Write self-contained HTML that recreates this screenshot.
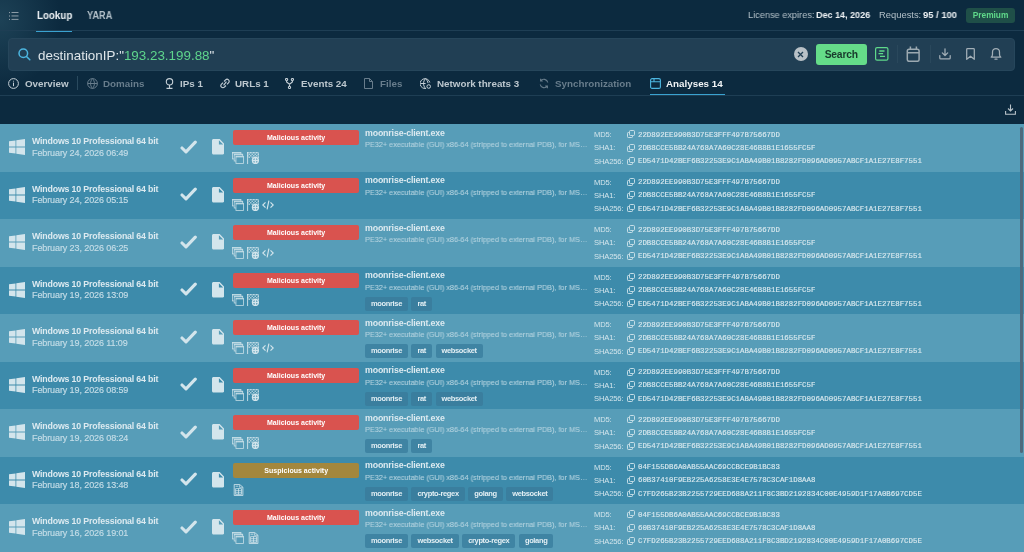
<!DOCTYPE html>
<html><head><meta charset="utf-8">
<style>
*{box-sizing:border-box;margin:0;padding:0}
html,body{width:1024px;height:552px;overflow:hidden;background:#0c2a3f;font-family:"Liberation Sans",sans-serif}
.abs{position:absolute}
.t{position:absolute;white-space:nowrap;line-height:1}
#topline{position:absolute;left:0;top:30px;width:1024px;height:1px;background:#1e3e54}
#tabline{position:absolute;left:0;top:95px;width:1024px;height:1px;background:#1e3e54}
.search{position:absolute;left:8px;top:38px;width:1007px;height:33px;background:#213f54;border-radius:4px;border:1px solid #26465b}
.tab{position:absolute;top:78px;font-size:9.8px;font-weight:bold;color:#bcc7ce;white-space:nowrap;line-height:12px}
.tab.dim{color:#687d8c}
.tab.act{color:#f2f5f7}
.ti{position:absolute;top:78px}
.row{position:absolute;left:0;width:1024px;height:48px}
.row>div{position:absolute;white-space:nowrap}
.win{left:9px;top:15px;color:#d3e5ec;width:16px;height:16px;line-height:0}
.os{left:32px;top:12px;font-size:8.8px;letter-spacing:-0.17px;font-weight:bold;color:#dceaf0;line-height:10px}
.date{left:32px;top:23.8px;font-size:9px;letter-spacing:-0.1px;color:#c5dde7;-webkit-text-stroke:0.15px #c5dde7;line-height:10px}
.chk{left:180px;top:15.5px;color:#d3e5ec;line-height:0}
.file{left:211.8px;top:15px;color:#d3e5ec;line-height:0}
.badge{left:233px;top:6px;width:126px;height:14.5px;border-radius:2px;color:#fff;font-size:8px;font-weight:bold;text-align:center;line-height:15.5px}
.badge span{display:inline-block;transform:scaleX(.88)}
.badge.mal{background:#d9534f}
.badge.sus{background:#a3873d}
.sicons{left:232px;top:27.5px;line-height:0;color:#d3e5ec}
.sic{display:inline-block;margin-right:3px;vertical-align:top}
.fname{left:365px;top:3.9px;font-size:8.8px;letter-spacing:-0.15px;font-weight:bold;color:#dceaf0;line-height:10px}
.desc{left:365px;top:16px;font-size:7.8px;transform:scaleX(.935);transform-origin:0 0;-webkit-text-stroke:0.1px #b4d3df;color:#b4d3df;line-height:9px}
.tags{left:365px;top:30.2px;line-height:0;font-size:0}
.tag{display:inline-block;height:14px;line-height:14.4px;padding:0 6px;margin-right:3.5px;background:#3f84a3;border-radius:2px;font-size:7.5px;letter-spacing:-0.35px;font-weight:bold;color:#e3eff4}
.row.dk .tag{background:#3a7e9e}
.hl{left:593.5px;font-size:7.6px;letter-spacing:-0.15px;color:#d3e5ec;line-height:9px}
.hv{left:637.5px;font-family:"Liberation Mono",monospace;font-size:7.4px;color:#d8e8ee;-webkit-text-stroke:0.15px #d8e8ee;line-height:9px}
.cp{left:627px;color:#d3e5ec;line-height:0}
#scroll{position:absolute;left:1019.5px;top:127px;width:3px;height:326px;background:#4d6a7d;border-radius:2px}
.t,.tab,.row>div,.search-t{will-change:transform}
</style></head><body>
<!-- top bar -->
<div class="abs" style="left:0;top:0;width:60px;height:96px;background:radial-gradient(ellipse 60px 70px at 0 20px,rgba(50,95,115,.45),rgba(12,42,63,0))"></div>
<svg class="abs" style="left:9px;top:12px" width="10" height="8" viewBox="0 0 10 8" fill="#9aa8b1"><rect x="0" y=".1" width="1" height="1"/><rect x="2.5" y=".1" width="7" height=".9"/><rect x="0" y="3.5" width="1" height="1"/><rect x="2.5" y="3.5" width="7" height=".9"/><rect x="0" y="6.9" width="1" height="1"/><rect x="2.5" y="6.9" width="7" height=".9"/></svg>
<div class="t" style="left:37px;top:11px;font-size:10.3px;font-weight:bold;color:#eef2f5;transform:scaleX(.95);transform-origin:0 0">Lookup</div>
<div class="t" style="left:87px;top:11px;font-size:10.3px;font-weight:bold;color:#b3c0c9;transform:scaleX(.9);transform-origin:0 0">YARA</div>
<div class="abs" style="left:36px;top:30px;width:36px;height:2px;background:#3aa2d0"></div>
<div id="topline"></div>
<div class="t" style="left:748px;top:9.8px;font-size:9.4px;color:#b3c0c8;transform:scaleX(.98);transform-origin:0 0">License expires:</div>
<div class="t" style="left:816.2px;top:9.8px;font-size:9.6px;font-weight:bold;color:#eef2f5;transform:scaleX(.94);transform-origin:0 0">Dec 14, 2026</div>
<div class="t" style="left:879px;top:9.8px;font-size:9.4px;color:#b3c0c8">Requests:</div>
<div class="t" style="left:923px;top:9.8px;font-size:9.6px;font-weight:bold;color:#eef2f5;transform:scaleX(.98);transform-origin:0 0">95 / 100</div>

<div class="abs" style="left:966px;top:8px;width:49px;height:14.5px;background:#1f4f48;border-radius:3px;color:#5fd98a;font-size:9.6px;font-weight:bold;text-align:center;line-height:13.4px;will-change:transform"><span style="display:inline-block;transform:scaleX(.87)">Premium</span></div>

<!-- search -->
<div class="search"></div>
<svg class="abs" style="left:18px;top:48px" width="13" height="13" viewBox="0 0 13 13" fill="none" stroke="#4cb6e0" stroke-width="1.5"><circle cx="5.3" cy="5.3" r="4.3"/><path d="M8.5 8.5L11.8 11.8" stroke-linecap="round"/></svg>
<div class="t" style="left:37.5px;top:47.5px;font-size:13.4px;color:#dfe6ea;line-height:15px">destinationIP:"<span style="color:#5ed58c">193.23.199.88</span>"</div>
<div class="abs" style="left:793.5px;top:47px;width:14px;height:14px;border-radius:50%;background:#b9c1c7"></div>
<svg class="abs" style="left:797px;top:50.5px" width="7" height="7" viewBox="0 0 7 7" stroke="#213f54" stroke-width="1.3"><path d="M1 1L6 6M6 1L1 6"/></svg>
<div class="abs" style="left:815.5px;top:43.5px;width:50.5px;height:21px;background:#65dc89;border-radius:3px;color:#183a2c;font-size:10.3px;font-weight:bold;text-align:center;line-height:21px;letter-spacing:-0.2px;will-change:transform">Search</div>
<svg class="abs" style="left:874.5px;top:47.2px" width="14" height="14" viewBox="0 0 14 14" fill="none" stroke="#5fd98a" stroke-width="1.2"><rect x=".6" y=".6" width="12.3" height="12.6" rx="1.5"/><path d="M4.3 4h5.2M3.5 6.6h4.6M5 9.3h5" stroke-width="1.3"/></svg>
<div class="abs" style="left:897px;top:45px;width:1px;height:18px;background:#2a485c"></div>
<svg class="abs" style="left:906px;top:46px" width="14" height="16" viewBox="0 0 14 16" fill="none" stroke="#9ca9b1" stroke-width="1.5"><rect x="1.3" y="3.3" width="11.8" height="12" rx="1.8"/><path d="M1.3 6.8h11.8M4.4 .6v3M10.4 .6v3"/></svg>
<div class="abs" style="left:930px;top:45px;width:1px;height:18px;background:#2a485c"></div>
<svg class="abs" style="left:939px;top:48px" width="12" height="12" viewBox="0 0 12 12" fill="none" stroke="#a3afb7" stroke-width="1.25" stroke-linecap="round" stroke-linejoin="round"><path d="M6 .8v6.6M3.3 4.9L6 7.5L8.7 4.9M.8 7.6v2.4q0 .9.9 .9h8.6q.9 0 .9-.9V7.6"/></svg>
<svg class="abs" style="left:966px;top:48px" width="9" height="12" viewBox="0 0 9 12" fill="none" stroke="#a3afb7" stroke-width="1.25" stroke-linejoin="round"><path d="M1.5 .7h6q.8 0 .8.8v9.8L4.5 8.2L.7 11.3V1.5q0-.8.8-.8z"/></svg>
<svg class="abs" style="left:990px;top:47px" width="12" height="13" viewBox="0 0 12 13" fill="none" stroke="#a3afb7" stroke-width="1.25" stroke-linejoin="round" stroke-linecap="round"><path d="M1.2 10.2h9.6q-1.3-1.2-1.3-3V5A3.5 3.5 0 0 0 2.5 5v2.2q0 1.8-1.3 3z"/><path d="M5 12.2h2"/></svg>

<!-- tabs -->
<svg class="ti" style="left:8px;top:78px" width="11" height="11" viewBox="0 0 11 11" fill="none" stroke="#c6d0d7" stroke-width="1"><circle cx="5.5" cy="5.5" r="4.9"/><path d="M5.5 4.6v3.6M5.5 2.8v.8"/></svg>
<div class="tab" style="left:24.5px">Overview</div>
<div class="abs" style="left:77px;top:76px;width:1px;height:14px;background:#2a4a5e"></div>
<svg class="ti" style="left:86.5px" width="11" height="11" viewBox="0 0 11 11" fill="none" stroke="#687d8c" stroke-width="1"><circle cx="5.5" cy="5.5" r="4.9"/><path d="M.6 5.5h9.8M5.5 .6c-2.6 2.8-2.6 7 0 9.8M5.5 .6c2.6 2.8 2.6 7 0 9.8"/></svg>
<div class="tab dim" style="left:103px">Domains</div>
<svg class="ti" style="left:164.5px" width="9" height="11" viewBox="0 0 9 11" fill="none" stroke="#c6d0d7" stroke-width="1.1"><circle cx="4.5" cy="3.8" r="3.2"/><path d="M4.5 7v3.2M1.5 10.4h6"/></svg>
<div class="tab" style="left:179.5px">IPs 1</div>
<svg class="ti" style="left:219.5px" width="10" height="11" viewBox="0 0 10 11" fill="none" stroke="#c6d0d7" stroke-width="1.1"><path d="M4 3.5L5.6 1.9a2 2 0 0 1 2.9 2.9L6.9 6.4M6 7.5L4.4 9.1a2 2 0 0 1-2.9-2.9L3.1 4.6M3.6 7.4L6.4 3.6"/></svg>
<div class="tab" style="left:235px">URLs 1</div>
<svg class="ti" style="left:285px" width="9" height="11" viewBox="0 0 9 11" fill="none" stroke="#c6d0d7" stroke-width="1.1"><circle cx="1.6" cy="1.6" r="1.1"/><circle cx="7.4" cy="1.6" r="1.1"/><path d="M1.6 2.7v1.3L4.5 6.2L7.4 4V2.7M4.5 6.2v2.2"/><circle cx="4.5" cy="9.4" r="1.1"/></svg>
<div class="tab" style="left:300.5px">Events 24</div>
<svg class="ti" style="left:363.5px" width="9" height="11" viewBox="0 0 9 11" fill="none" stroke="#687d8c" stroke-width="1"><path d="M.5 .5h5l3 3v7h-8z M5.5 .5v3h3"/></svg>
<div class="tab dim" style="left:379.5px">Files</div>
<svg class="ti" style="left:419.5px" width="11" height="11" viewBox="0 0 11 11" fill="none" stroke="#c6d0d7" stroke-width="1"><path d="M9.8 4.5A4.9 4.9 0 1 0 6 10.4"/><path d="M.6 5.5h5M5.5 .6c-2.6 2.8-2.6 7 0 9.8M5.5 .6c1.6 1.5 2.3 3 2.5 4.5"/><circle cx="8.7" cy="8.5" r="1.8"/></svg>
<div class="tab" style="left:436.5px">Network threats 3</div>
<svg class="ti" style="left:538.5px" width="10" height="11" viewBox="0 0 10 11" fill="none" stroke="#687d8c" stroke-width="1.1"><path d="M8.8 4.5A4 4 0 0 0 1.6 3M1.2 6.5A4 4 0 0 0 8.4 8M1.6 .8V3h2.2M8.4 10.2V8H6.2"/></svg>
<div class="tab dim" style="left:554.5px">Synchronization</div>
<svg class="ti" style="left:649.5px" width="11" height="11" viewBox="0 0 11 11" fill="none" stroke="#4cb6e0" stroke-width="1.1"><rect x=".6" y=".6" width="9.8" height="9.8" rx="1.5"/><path d="M.6 3.8h9.8M4 .6v3.2"/></svg>
<div class="tab act" style="left:666px">Analyses 14</div>
<div class="abs" style="left:649.5px;top:94px;width:75.5px;height:2px;background:#3aa2d0"></div>
<div id="tabline"></div>
<svg class="abs" style="left:1005px;top:104px" width="11" height="11" viewBox="0 0 11 11" fill="none" stroke="#b9c3ca" stroke-width="1.1"><path d="M5.5 .5v6.5M3 4.5L5.5 7L8 4.5M.6 7v3.3h9.8V7"/></svg>

<!-- rows -->
<div class="row lt" style="top:124.0px;background:#579db8">
<div class="win"><svg width="16" height="16" viewBox="0 0 16 16" fill="currentColor"><path d="M0 2.3L6.5 1.4V7.6H0zM7.3 1.3L16 0V7.6H7.3zM0 8.4H6.5V14.6L0 13.7zM7.3 8.4H16V16L7.3 14.7z"/></svg></div>
<div class="os">Windows 10 Professional 64 bit</div>
<div class="date">February 24, 2026 06:49</div>
<div class="chk"><svg width="17" height="14" viewBox="0 0 17 14"><path d="M2 8L6 11.8L15.3 2.2" fill="none" stroke="currentColor" stroke-width="3.1" stroke-linecap="round" stroke-linejoin="round"/></svg></div>
<div class="file"><svg width="12.3" height="15.5" viewBox="4 2 16 20"><path d="M6 2c-1.1 0-1.99.9-1.99 2L4 20c0 1.1.89 2 1.99 2H18c1.1 0 2-.9 2-2V8l-6-6H6zm7 7V3.5L18.5 9H13z" fill="currentColor"/></svg></div>
<div class="badge mal"><span>Malicious activity</span></div>
<div class="sicons"><span class="sic stack"><svg width="12" height="12" viewBox="0 0 12 12"><g fill="#579db8" stroke="currentColor" stroke-width=".8" opacity=".9"><rect x=".45" y=".45" width="8.5" height="6.5"/><rect x="2.2" y="2.2" width="8.5" height="6.8"/><rect x="3.95" y="4.3" width="7.6" height="7.25"/></g><g fill="currentColor" opacity=".75"><rect x=".45" y=".45" width="8.5" height="1.1"/><rect x="2.2" y="2.2" width="8.5" height="1.1"/><rect x="3.95" y="4.3" width="7.6" height="1.1"/></g></svg></span><span class="sic checker"><svg width="12" height="12" viewBox="0 0 12 12"><g fill="currentColor" opacity=".7"><rect x="0.0" y="0.0" width="1.5" height="1.5"/><rect x="3.0" y="0.0" width="1.5" height="1.5"/><rect x="6.0" y="0.0" width="1.5" height="1.5"/><rect x="9.0" y="0.0" width="1.5" height="1.5"/><rect x="1.5" y="1.5" width="1.5" height="1.5"/><rect x="4.5" y="1.5" width="1.5" height="1.5"/><rect x="7.5" y="1.5" width="1.5" height="1.5"/><rect x="10.5" y="1.5" width="1.5" height="1.5"/><rect x="0.0" y="3.0" width="1.5" height="1.5"/><rect x="3.0" y="3.0" width="1.5" height="1.5"/><rect x="6.0" y="3.0" width="1.5" height="1.5"/><rect x="9.0" y="3.0" width="1.5" height="1.5"/><rect x="1.5" y="4.5" width="1.5" height="1.5"/><rect x="4.5" y="4.5" width="1.5" height="1.5"/><rect x="7.5" y="4.5" width="1.5" height="1.5"/><rect x="10.5" y="4.5" width="1.5" height="1.5"/></g><rect x="0" y="0" width="1.1" height="12" fill="currentColor" opacity=".8"/><path d="M.5 .5H11.5V6" fill="none" stroke="currentColor" stroke-width=".8" opacity=".6"/><circle cx="8.4" cy="8.5" r="3.6" fill="#579db8"/><circle cx="8.4" cy="8.5" r="3.0" fill="none" stroke="currentColor" stroke-width="1.3"/><path d="M8.4 5.8v5.4M5.7 8.5h5.4" stroke="currentColor" stroke-width="1.4"/></svg></span></div>
<div class="fname">moonrise-client.exe</div>
<div class="desc">PE32+ executable (GUI) x86-64 (stripped to external PDB), for MS…</div>
<div class="tags"></div>
<div class="hl" style="top:6px">MD5:</div><div class="hl" style="top:19.3px">SHA1:</div><div class="hl" style="top:32.6px">SHA256:</div>
<div class="cp" style="top:6.3px"><svg width="8" height="8" viewBox="0 0 8 8" fill="none" stroke="currentColor" stroke-width=".9"><rect x="2.5" y=".5" width="5" height="5" rx="1"/><path d="M2 2.5H1.3Q.5 2.5 .5 3.3V6.7Q.5 7.5 1.3 7.5H4.7Q5.5 7.5 5.5 6.7V6"/></svg></div>
<div class="cp" style="top:19.6px"><svg width="8" height="8" viewBox="0 0 8 8" fill="none" stroke="currentColor" stroke-width=".9"><rect x="2.5" y=".5" width="5" height="5" rx="1"/><path d="M2 2.5H1.3Q.5 2.5 .5 3.3V6.7Q.5 7.5 1.3 7.5H4.7Q5.5 7.5 5.5 6.7V6"/></svg></div>
<div class="cp" style="top:32.9px"><svg width="8" height="8" viewBox="0 0 8 8" fill="none" stroke="currentColor" stroke-width=".9"><rect x="2.5" y=".5" width="5" height="5" rx="1"/><path d="M2 2.5H1.3Q.5 2.5 .5 3.3V6.7Q.5 7.5 1.3 7.5H4.7Q5.5 7.5 5.5 6.7V6"/></svg></div>
<div class="hv" style="top:6.6px">22D892EE990B3D75E3FFF497B75667DD</div><div class="hv" style="top:19.9px">2DB8CCE5BB24A768A7A60C28E46B8B1E1655FC5F</div><div class="hv" style="top:33.2px">ED5471D42BEF6B32253E9C1ABA49B01B8282FD096AD0957ABCF1A1E27E8F7551</div>
</div>
<div class="row dk" style="top:171.5px;background:#3d8bab">
<div class="win"><svg width="16" height="16" viewBox="0 0 16 16" fill="currentColor"><path d="M0 2.3L6.5 1.4V7.6H0zM7.3 1.3L16 0V7.6H7.3zM0 8.4H6.5V14.6L0 13.7zM7.3 8.4H16V16L7.3 14.7z"/></svg></div>
<div class="os">Windows 10 Professional 64 bit</div>
<div class="date">February 24, 2026 05:15</div>
<div class="chk"><svg width="17" height="14" viewBox="0 0 17 14"><path d="M2 8L6 11.8L15.3 2.2" fill="none" stroke="currentColor" stroke-width="3.1" stroke-linecap="round" stroke-linejoin="round"/></svg></div>
<div class="file"><svg width="12.3" height="15.5" viewBox="4 2 16 20"><path d="M6 2c-1.1 0-1.99.9-1.99 2L4 20c0 1.1.89 2 1.99 2H18c1.1 0 2-.9 2-2V8l-6-6H6zm7 7V3.5L18.5 9H13z" fill="currentColor"/></svg></div>
<div class="badge mal"><span>Malicious activity</span></div>
<div class="sicons"><span class="sic stack"><svg width="12" height="12" viewBox="0 0 12 12"><g fill="#3d8bab" stroke="currentColor" stroke-width=".8" opacity=".9"><rect x=".45" y=".45" width="8.5" height="6.5"/><rect x="2.2" y="2.2" width="8.5" height="6.8"/><rect x="3.95" y="4.3" width="7.6" height="7.25"/></g><g fill="currentColor" opacity=".75"><rect x=".45" y=".45" width="8.5" height="1.1"/><rect x="2.2" y="2.2" width="8.5" height="1.1"/><rect x="3.95" y="4.3" width="7.6" height="1.1"/></g></svg></span><span class="sic checker"><svg width="12" height="12" viewBox="0 0 12 12"><g fill="currentColor" opacity=".7"><rect x="0.0" y="0.0" width="1.5" height="1.5"/><rect x="3.0" y="0.0" width="1.5" height="1.5"/><rect x="6.0" y="0.0" width="1.5" height="1.5"/><rect x="9.0" y="0.0" width="1.5" height="1.5"/><rect x="1.5" y="1.5" width="1.5" height="1.5"/><rect x="4.5" y="1.5" width="1.5" height="1.5"/><rect x="7.5" y="1.5" width="1.5" height="1.5"/><rect x="10.5" y="1.5" width="1.5" height="1.5"/><rect x="0.0" y="3.0" width="1.5" height="1.5"/><rect x="3.0" y="3.0" width="1.5" height="1.5"/><rect x="6.0" y="3.0" width="1.5" height="1.5"/><rect x="9.0" y="3.0" width="1.5" height="1.5"/><rect x="1.5" y="4.5" width="1.5" height="1.5"/><rect x="4.5" y="4.5" width="1.5" height="1.5"/><rect x="7.5" y="4.5" width="1.5" height="1.5"/><rect x="10.5" y="4.5" width="1.5" height="1.5"/></g><rect x="0" y="0" width="1.1" height="12" fill="currentColor" opacity=".8"/><path d="M.5 .5H11.5V6" fill="none" stroke="currentColor" stroke-width=".8" opacity=".6"/><circle cx="8.4" cy="8.5" r="3.6" fill="#3d8bab"/><circle cx="8.4" cy="8.5" r="3.0" fill="none" stroke="currentColor" stroke-width="1.3"/><path d="M8.4 5.8v5.4M5.7 8.5h5.4" stroke="currentColor" stroke-width="1.4"/></svg></span><span class="sic code"><svg width="12" height="12" viewBox="0 0 12 12" fill="none" stroke="currentColor" stroke-width="1.15"><path d="M3.5 3.3L.8 6l2.7 2.7M8.5 3.3L11.2 6l-2.7 2.7M6.9 1.7L5.1 10.3"/></svg></span></div>
<div class="fname">moonrise-client.exe</div>
<div class="desc">PE32+ executable (GUI) x86-64 (stripped to external PDB), for MS…</div>
<div class="tags"></div>
<div class="hl" style="top:6px">MD5:</div><div class="hl" style="top:19.3px">SHA1:</div><div class="hl" style="top:32.6px">SHA256:</div>
<div class="cp" style="top:6.3px"><svg width="8" height="8" viewBox="0 0 8 8" fill="none" stroke="currentColor" stroke-width=".9"><rect x="2.5" y=".5" width="5" height="5" rx="1"/><path d="M2 2.5H1.3Q.5 2.5 .5 3.3V6.7Q.5 7.5 1.3 7.5H4.7Q5.5 7.5 5.5 6.7V6"/></svg></div>
<div class="cp" style="top:19.6px"><svg width="8" height="8" viewBox="0 0 8 8" fill="none" stroke="currentColor" stroke-width=".9"><rect x="2.5" y=".5" width="5" height="5" rx="1"/><path d="M2 2.5H1.3Q.5 2.5 .5 3.3V6.7Q.5 7.5 1.3 7.5H4.7Q5.5 7.5 5.5 6.7V6"/></svg></div>
<div class="cp" style="top:32.9px"><svg width="8" height="8" viewBox="0 0 8 8" fill="none" stroke="currentColor" stroke-width=".9"><rect x="2.5" y=".5" width="5" height="5" rx="1"/><path d="M2 2.5H1.3Q.5 2.5 .5 3.3V6.7Q.5 7.5 1.3 7.5H4.7Q5.5 7.5 5.5 6.7V6"/></svg></div>
<div class="hv" style="top:6.6px">22D892EE990B3D75E3FFF497B75667DD</div><div class="hv" style="top:19.9px">2DB8CCE5BB24A768A7A60C28E46B8B1E1655FC5F</div><div class="hv" style="top:33.2px">ED5471D42BEF6B32253E9C1ABA49B01B8282FD096AD0957ABCF1A1E27E8F7551</div>
</div>
<div class="row lt" style="top:219.0px;background:#579db8">
<div class="win"><svg width="16" height="16" viewBox="0 0 16 16" fill="currentColor"><path d="M0 2.3L6.5 1.4V7.6H0zM7.3 1.3L16 0V7.6H7.3zM0 8.4H6.5V14.6L0 13.7zM7.3 8.4H16V16L7.3 14.7z"/></svg></div>
<div class="os">Windows 10 Professional 64 bit</div>
<div class="date">February 23, 2026 06:25</div>
<div class="chk"><svg width="17" height="14" viewBox="0 0 17 14"><path d="M2 8L6 11.8L15.3 2.2" fill="none" stroke="currentColor" stroke-width="3.1" stroke-linecap="round" stroke-linejoin="round"/></svg></div>
<div class="file"><svg width="12.3" height="15.5" viewBox="4 2 16 20"><path d="M6 2c-1.1 0-1.99.9-1.99 2L4 20c0 1.1.89 2 1.99 2H18c1.1 0 2-.9 2-2V8l-6-6H6zm7 7V3.5L18.5 9H13z" fill="currentColor"/></svg></div>
<div class="badge mal"><span>Malicious activity</span></div>
<div class="sicons"><span class="sic stack"><svg width="12" height="12" viewBox="0 0 12 12"><g fill="#579db8" stroke="currentColor" stroke-width=".8" opacity=".9"><rect x=".45" y=".45" width="8.5" height="6.5"/><rect x="2.2" y="2.2" width="8.5" height="6.8"/><rect x="3.95" y="4.3" width="7.6" height="7.25"/></g><g fill="currentColor" opacity=".75"><rect x=".45" y=".45" width="8.5" height="1.1"/><rect x="2.2" y="2.2" width="8.5" height="1.1"/><rect x="3.95" y="4.3" width="7.6" height="1.1"/></g></svg></span><span class="sic checker"><svg width="12" height="12" viewBox="0 0 12 12"><g fill="currentColor" opacity=".7"><rect x="0.0" y="0.0" width="1.5" height="1.5"/><rect x="3.0" y="0.0" width="1.5" height="1.5"/><rect x="6.0" y="0.0" width="1.5" height="1.5"/><rect x="9.0" y="0.0" width="1.5" height="1.5"/><rect x="1.5" y="1.5" width="1.5" height="1.5"/><rect x="4.5" y="1.5" width="1.5" height="1.5"/><rect x="7.5" y="1.5" width="1.5" height="1.5"/><rect x="10.5" y="1.5" width="1.5" height="1.5"/><rect x="0.0" y="3.0" width="1.5" height="1.5"/><rect x="3.0" y="3.0" width="1.5" height="1.5"/><rect x="6.0" y="3.0" width="1.5" height="1.5"/><rect x="9.0" y="3.0" width="1.5" height="1.5"/><rect x="1.5" y="4.5" width="1.5" height="1.5"/><rect x="4.5" y="4.5" width="1.5" height="1.5"/><rect x="7.5" y="4.5" width="1.5" height="1.5"/><rect x="10.5" y="4.5" width="1.5" height="1.5"/></g><rect x="0" y="0" width="1.1" height="12" fill="currentColor" opacity=".8"/><path d="M.5 .5H11.5V6" fill="none" stroke="currentColor" stroke-width=".8" opacity=".6"/><circle cx="8.4" cy="8.5" r="3.6" fill="#579db8"/><circle cx="8.4" cy="8.5" r="3.0" fill="none" stroke="currentColor" stroke-width="1.3"/><path d="M8.4 5.8v5.4M5.7 8.5h5.4" stroke="currentColor" stroke-width="1.4"/></svg></span><span class="sic code"><svg width="12" height="12" viewBox="0 0 12 12" fill="none" stroke="currentColor" stroke-width="1.15"><path d="M3.5 3.3L.8 6l2.7 2.7M8.5 3.3L11.2 6l-2.7 2.7M6.9 1.7L5.1 10.3"/></svg></span></div>
<div class="fname">moonrise-client.exe</div>
<div class="desc">PE32+ executable (GUI) x86-64 (stripped to external PDB), for MS…</div>
<div class="tags"></div>
<div class="hl" style="top:6px">MD5:</div><div class="hl" style="top:19.3px">SHA1:</div><div class="hl" style="top:32.6px">SHA256:</div>
<div class="cp" style="top:6.3px"><svg width="8" height="8" viewBox="0 0 8 8" fill="none" stroke="currentColor" stroke-width=".9"><rect x="2.5" y=".5" width="5" height="5" rx="1"/><path d="M2 2.5H1.3Q.5 2.5 .5 3.3V6.7Q.5 7.5 1.3 7.5H4.7Q5.5 7.5 5.5 6.7V6"/></svg></div>
<div class="cp" style="top:19.6px"><svg width="8" height="8" viewBox="0 0 8 8" fill="none" stroke="currentColor" stroke-width=".9"><rect x="2.5" y=".5" width="5" height="5" rx="1"/><path d="M2 2.5H1.3Q.5 2.5 .5 3.3V6.7Q.5 7.5 1.3 7.5H4.7Q5.5 7.5 5.5 6.7V6"/></svg></div>
<div class="cp" style="top:32.9px"><svg width="8" height="8" viewBox="0 0 8 8" fill="none" stroke="currentColor" stroke-width=".9"><rect x="2.5" y=".5" width="5" height="5" rx="1"/><path d="M2 2.5H1.3Q.5 2.5 .5 3.3V6.7Q.5 7.5 1.3 7.5H4.7Q5.5 7.5 5.5 6.7V6"/></svg></div>
<div class="hv" style="top:6.6px">22D892EE990B3D75E3FFF497B75667DD</div><div class="hv" style="top:19.9px">2DB8CCE5BB24A768A7A60C28E46B8B1E1655FC5F</div><div class="hv" style="top:33.2px">ED5471D42BEF6B32253E9C1ABA49B01B8282FD096AD0957ABCF1A1E27E8F7551</div>
</div>
<div class="row dk" style="top:266.5px;background:#3d8bab">
<div class="win"><svg width="16" height="16" viewBox="0 0 16 16" fill="currentColor"><path d="M0 2.3L6.5 1.4V7.6H0zM7.3 1.3L16 0V7.6H7.3zM0 8.4H6.5V14.6L0 13.7zM7.3 8.4H16V16L7.3 14.7z"/></svg></div>
<div class="os">Windows 10 Professional 64 bit</div>
<div class="date">February 19, 2026 13:09</div>
<div class="chk"><svg width="17" height="14" viewBox="0 0 17 14"><path d="M2 8L6 11.8L15.3 2.2" fill="none" stroke="currentColor" stroke-width="3.1" stroke-linecap="round" stroke-linejoin="round"/></svg></div>
<div class="file"><svg width="12.3" height="15.5" viewBox="4 2 16 20"><path d="M6 2c-1.1 0-1.99.9-1.99 2L4 20c0 1.1.89 2 1.99 2H18c1.1 0 2-.9 2-2V8l-6-6H6zm7 7V3.5L18.5 9H13z" fill="currentColor"/></svg></div>
<div class="badge mal"><span>Malicious activity</span></div>
<div class="sicons"><span class="sic stack"><svg width="12" height="12" viewBox="0 0 12 12"><g fill="#3d8bab" stroke="currentColor" stroke-width=".8" opacity=".9"><rect x=".45" y=".45" width="8.5" height="6.5"/><rect x="2.2" y="2.2" width="8.5" height="6.8"/><rect x="3.95" y="4.3" width="7.6" height="7.25"/></g><g fill="currentColor" opacity=".75"><rect x=".45" y=".45" width="8.5" height="1.1"/><rect x="2.2" y="2.2" width="8.5" height="1.1"/><rect x="3.95" y="4.3" width="7.6" height="1.1"/></g></svg></span><span class="sic checker"><svg width="12" height="12" viewBox="0 0 12 12"><g fill="currentColor" opacity=".7"><rect x="0.0" y="0.0" width="1.5" height="1.5"/><rect x="3.0" y="0.0" width="1.5" height="1.5"/><rect x="6.0" y="0.0" width="1.5" height="1.5"/><rect x="9.0" y="0.0" width="1.5" height="1.5"/><rect x="1.5" y="1.5" width="1.5" height="1.5"/><rect x="4.5" y="1.5" width="1.5" height="1.5"/><rect x="7.5" y="1.5" width="1.5" height="1.5"/><rect x="10.5" y="1.5" width="1.5" height="1.5"/><rect x="0.0" y="3.0" width="1.5" height="1.5"/><rect x="3.0" y="3.0" width="1.5" height="1.5"/><rect x="6.0" y="3.0" width="1.5" height="1.5"/><rect x="9.0" y="3.0" width="1.5" height="1.5"/><rect x="1.5" y="4.5" width="1.5" height="1.5"/><rect x="4.5" y="4.5" width="1.5" height="1.5"/><rect x="7.5" y="4.5" width="1.5" height="1.5"/><rect x="10.5" y="4.5" width="1.5" height="1.5"/></g><rect x="0" y="0" width="1.1" height="12" fill="currentColor" opacity=".8"/><path d="M.5 .5H11.5V6" fill="none" stroke="currentColor" stroke-width=".8" opacity=".6"/><circle cx="8.4" cy="8.5" r="3.6" fill="#3d8bab"/><circle cx="8.4" cy="8.5" r="3.0" fill="none" stroke="currentColor" stroke-width="1.3"/><path d="M8.4 5.8v5.4M5.7 8.5h5.4" stroke="currentColor" stroke-width="1.4"/></svg></span></div>
<div class="fname">moonrise-client.exe</div>
<div class="desc">PE32+ executable (GUI) x86-64 (stripped to external PDB), for MS…</div>
<div class="tags"><span class="tag">moonrise</span><span class="tag">rat</span></div>
<div class="hl" style="top:6px">MD5:</div><div class="hl" style="top:19.3px">SHA1:</div><div class="hl" style="top:32.6px">SHA256:</div>
<div class="cp" style="top:6.3px"><svg width="8" height="8" viewBox="0 0 8 8" fill="none" stroke="currentColor" stroke-width=".9"><rect x="2.5" y=".5" width="5" height="5" rx="1"/><path d="M2 2.5H1.3Q.5 2.5 .5 3.3V6.7Q.5 7.5 1.3 7.5H4.7Q5.5 7.5 5.5 6.7V6"/></svg></div>
<div class="cp" style="top:19.6px"><svg width="8" height="8" viewBox="0 0 8 8" fill="none" stroke="currentColor" stroke-width=".9"><rect x="2.5" y=".5" width="5" height="5" rx="1"/><path d="M2 2.5H1.3Q.5 2.5 .5 3.3V6.7Q.5 7.5 1.3 7.5H4.7Q5.5 7.5 5.5 6.7V6"/></svg></div>
<div class="cp" style="top:32.9px"><svg width="8" height="8" viewBox="0 0 8 8" fill="none" stroke="currentColor" stroke-width=".9"><rect x="2.5" y=".5" width="5" height="5" rx="1"/><path d="M2 2.5H1.3Q.5 2.5 .5 3.3V6.7Q.5 7.5 1.3 7.5H4.7Q5.5 7.5 5.5 6.7V6"/></svg></div>
<div class="hv" style="top:6.6px">22D892EE990B3D75E3FFF497B75667DD</div><div class="hv" style="top:19.9px">2DB8CCE5BB24A768A7A60C28E46B8B1E1655FC5F</div><div class="hv" style="top:33.2px">ED5471D42BEF6B32253E9C1ABA49B01B8282FD096AD0957ABCF1A1E27E8F7551</div>
</div>
<div class="row lt" style="top:314.0px;background:#579db8">
<div class="win"><svg width="16" height="16" viewBox="0 0 16 16" fill="currentColor"><path d="M0 2.3L6.5 1.4V7.6H0zM7.3 1.3L16 0V7.6H7.3zM0 8.4H6.5V14.6L0 13.7zM7.3 8.4H16V16L7.3 14.7z"/></svg></div>
<div class="os">Windows 10 Professional 64 bit</div>
<div class="date">February 19, 2026 11:09</div>
<div class="chk"><svg width="17" height="14" viewBox="0 0 17 14"><path d="M2 8L6 11.8L15.3 2.2" fill="none" stroke="currentColor" stroke-width="3.1" stroke-linecap="round" stroke-linejoin="round"/></svg></div>
<div class="file"><svg width="12.3" height="15.5" viewBox="4 2 16 20"><path d="M6 2c-1.1 0-1.99.9-1.99 2L4 20c0 1.1.89 2 1.99 2H18c1.1 0 2-.9 2-2V8l-6-6H6zm7 7V3.5L18.5 9H13z" fill="currentColor"/></svg></div>
<div class="badge mal"><span>Malicious activity</span></div>
<div class="sicons"><span class="sic stack"><svg width="12" height="12" viewBox="0 0 12 12"><g fill="#579db8" stroke="currentColor" stroke-width=".8" opacity=".9"><rect x=".45" y=".45" width="8.5" height="6.5"/><rect x="2.2" y="2.2" width="8.5" height="6.8"/><rect x="3.95" y="4.3" width="7.6" height="7.25"/></g><g fill="currentColor" opacity=".75"><rect x=".45" y=".45" width="8.5" height="1.1"/><rect x="2.2" y="2.2" width="8.5" height="1.1"/><rect x="3.95" y="4.3" width="7.6" height="1.1"/></g></svg></span><span class="sic checker"><svg width="12" height="12" viewBox="0 0 12 12"><g fill="currentColor" opacity=".7"><rect x="0.0" y="0.0" width="1.5" height="1.5"/><rect x="3.0" y="0.0" width="1.5" height="1.5"/><rect x="6.0" y="0.0" width="1.5" height="1.5"/><rect x="9.0" y="0.0" width="1.5" height="1.5"/><rect x="1.5" y="1.5" width="1.5" height="1.5"/><rect x="4.5" y="1.5" width="1.5" height="1.5"/><rect x="7.5" y="1.5" width="1.5" height="1.5"/><rect x="10.5" y="1.5" width="1.5" height="1.5"/><rect x="0.0" y="3.0" width="1.5" height="1.5"/><rect x="3.0" y="3.0" width="1.5" height="1.5"/><rect x="6.0" y="3.0" width="1.5" height="1.5"/><rect x="9.0" y="3.0" width="1.5" height="1.5"/><rect x="1.5" y="4.5" width="1.5" height="1.5"/><rect x="4.5" y="4.5" width="1.5" height="1.5"/><rect x="7.5" y="4.5" width="1.5" height="1.5"/><rect x="10.5" y="4.5" width="1.5" height="1.5"/></g><rect x="0" y="0" width="1.1" height="12" fill="currentColor" opacity=".8"/><path d="M.5 .5H11.5V6" fill="none" stroke="currentColor" stroke-width=".8" opacity=".6"/><circle cx="8.4" cy="8.5" r="3.6" fill="#579db8"/><circle cx="8.4" cy="8.5" r="3.0" fill="none" stroke="currentColor" stroke-width="1.3"/><path d="M8.4 5.8v5.4M5.7 8.5h5.4" stroke="currentColor" stroke-width="1.4"/></svg></span><span class="sic code"><svg width="12" height="12" viewBox="0 0 12 12" fill="none" stroke="currentColor" stroke-width="1.15"><path d="M3.5 3.3L.8 6l2.7 2.7M8.5 3.3L11.2 6l-2.7 2.7M6.9 1.7L5.1 10.3"/></svg></span></div>
<div class="fname">moonrise-client.exe</div>
<div class="desc">PE32+ executable (GUI) x86-64 (stripped to external PDB), for MS…</div>
<div class="tags"><span class="tag">moonrise</span><span class="tag">rat</span><span class="tag">websocket</span></div>
<div class="hl" style="top:6px">MD5:</div><div class="hl" style="top:19.3px">SHA1:</div><div class="hl" style="top:32.6px">SHA256:</div>
<div class="cp" style="top:6.3px"><svg width="8" height="8" viewBox="0 0 8 8" fill="none" stroke="currentColor" stroke-width=".9"><rect x="2.5" y=".5" width="5" height="5" rx="1"/><path d="M2 2.5H1.3Q.5 2.5 .5 3.3V6.7Q.5 7.5 1.3 7.5H4.7Q5.5 7.5 5.5 6.7V6"/></svg></div>
<div class="cp" style="top:19.6px"><svg width="8" height="8" viewBox="0 0 8 8" fill="none" stroke="currentColor" stroke-width=".9"><rect x="2.5" y=".5" width="5" height="5" rx="1"/><path d="M2 2.5H1.3Q.5 2.5 .5 3.3V6.7Q.5 7.5 1.3 7.5H4.7Q5.5 7.5 5.5 6.7V6"/></svg></div>
<div class="cp" style="top:32.9px"><svg width="8" height="8" viewBox="0 0 8 8" fill="none" stroke="currentColor" stroke-width=".9"><rect x="2.5" y=".5" width="5" height="5" rx="1"/><path d="M2 2.5H1.3Q.5 2.5 .5 3.3V6.7Q.5 7.5 1.3 7.5H4.7Q5.5 7.5 5.5 6.7V6"/></svg></div>
<div class="hv" style="top:6.6px">22D892EE990B3D75E3FFF497B75667DD</div><div class="hv" style="top:19.9px">2DB8CCE5BB24A768A7A60C28E46B8B1E1655FC5F</div><div class="hv" style="top:33.2px">ED5471D42BEF6B32253E9C1ABA49B01B8282FD096AD0957ABCF1A1E27E8F7551</div>
</div>
<div class="row dk" style="top:361.5px;background:#3d8bab">
<div class="win"><svg width="16" height="16" viewBox="0 0 16 16" fill="currentColor"><path d="M0 2.3L6.5 1.4V7.6H0zM7.3 1.3L16 0V7.6H7.3zM0 8.4H6.5V14.6L0 13.7zM7.3 8.4H16V16L7.3 14.7z"/></svg></div>
<div class="os">Windows 10 Professional 64 bit</div>
<div class="date">February 19, 2026 08:59</div>
<div class="chk"><svg width="17" height="14" viewBox="0 0 17 14"><path d="M2 8L6 11.8L15.3 2.2" fill="none" stroke="currentColor" stroke-width="3.1" stroke-linecap="round" stroke-linejoin="round"/></svg></div>
<div class="file"><svg width="12.3" height="15.5" viewBox="4 2 16 20"><path d="M6 2c-1.1 0-1.99.9-1.99 2L4 20c0 1.1.89 2 1.99 2H18c1.1 0 2-.9 2-2V8l-6-6H6zm7 7V3.5L18.5 9H13z" fill="currentColor"/></svg></div>
<div class="badge mal"><span>Malicious activity</span></div>
<div class="sicons"><span class="sic stack"><svg width="12" height="12" viewBox="0 0 12 12"><g fill="#3d8bab" stroke="currentColor" stroke-width=".8" opacity=".9"><rect x=".45" y=".45" width="8.5" height="6.5"/><rect x="2.2" y="2.2" width="8.5" height="6.8"/><rect x="3.95" y="4.3" width="7.6" height="7.25"/></g><g fill="currentColor" opacity=".75"><rect x=".45" y=".45" width="8.5" height="1.1"/><rect x="2.2" y="2.2" width="8.5" height="1.1"/><rect x="3.95" y="4.3" width="7.6" height="1.1"/></g></svg></span><span class="sic checker"><svg width="12" height="12" viewBox="0 0 12 12"><g fill="currentColor" opacity=".7"><rect x="0.0" y="0.0" width="1.5" height="1.5"/><rect x="3.0" y="0.0" width="1.5" height="1.5"/><rect x="6.0" y="0.0" width="1.5" height="1.5"/><rect x="9.0" y="0.0" width="1.5" height="1.5"/><rect x="1.5" y="1.5" width="1.5" height="1.5"/><rect x="4.5" y="1.5" width="1.5" height="1.5"/><rect x="7.5" y="1.5" width="1.5" height="1.5"/><rect x="10.5" y="1.5" width="1.5" height="1.5"/><rect x="0.0" y="3.0" width="1.5" height="1.5"/><rect x="3.0" y="3.0" width="1.5" height="1.5"/><rect x="6.0" y="3.0" width="1.5" height="1.5"/><rect x="9.0" y="3.0" width="1.5" height="1.5"/><rect x="1.5" y="4.5" width="1.5" height="1.5"/><rect x="4.5" y="4.5" width="1.5" height="1.5"/><rect x="7.5" y="4.5" width="1.5" height="1.5"/><rect x="10.5" y="4.5" width="1.5" height="1.5"/></g><rect x="0" y="0" width="1.1" height="12" fill="currentColor" opacity=".8"/><path d="M.5 .5H11.5V6" fill="none" stroke="currentColor" stroke-width=".8" opacity=".6"/><circle cx="8.4" cy="8.5" r="3.6" fill="#3d8bab"/><circle cx="8.4" cy="8.5" r="3.0" fill="none" stroke="currentColor" stroke-width="1.3"/><path d="M8.4 5.8v5.4M5.7 8.5h5.4" stroke="currentColor" stroke-width="1.4"/></svg></span></div>
<div class="fname">moonrise-client.exe</div>
<div class="desc">PE32+ executable (GUI) x86-64 (stripped to external PDB), for MS…</div>
<div class="tags"><span class="tag">moonrise</span><span class="tag">rat</span><span class="tag">websocket</span></div>
<div class="hl" style="top:6px">MD5:</div><div class="hl" style="top:19.3px">SHA1:</div><div class="hl" style="top:32.6px">SHA256:</div>
<div class="cp" style="top:6.3px"><svg width="8" height="8" viewBox="0 0 8 8" fill="none" stroke="currentColor" stroke-width=".9"><rect x="2.5" y=".5" width="5" height="5" rx="1"/><path d="M2 2.5H1.3Q.5 2.5 .5 3.3V6.7Q.5 7.5 1.3 7.5H4.7Q5.5 7.5 5.5 6.7V6"/></svg></div>
<div class="cp" style="top:19.6px"><svg width="8" height="8" viewBox="0 0 8 8" fill="none" stroke="currentColor" stroke-width=".9"><rect x="2.5" y=".5" width="5" height="5" rx="1"/><path d="M2 2.5H1.3Q.5 2.5 .5 3.3V6.7Q.5 7.5 1.3 7.5H4.7Q5.5 7.5 5.5 6.7V6"/></svg></div>
<div class="cp" style="top:32.9px"><svg width="8" height="8" viewBox="0 0 8 8" fill="none" stroke="currentColor" stroke-width=".9"><rect x="2.5" y=".5" width="5" height="5" rx="1"/><path d="M2 2.5H1.3Q.5 2.5 .5 3.3V6.7Q.5 7.5 1.3 7.5H4.7Q5.5 7.5 5.5 6.7V6"/></svg></div>
<div class="hv" style="top:6.6px">22D892EE990B3D75E3FFF497B75667DD</div><div class="hv" style="top:19.9px">2DB8CCE5BB24A768A7A60C28E46B8B1E1655FC5F</div><div class="hv" style="top:33.2px">ED5471D42BEF6B32253E9C1ABA49B01B8282FD096AD0957ABCF1A1E27E8F7551</div>
</div>
<div class="row lt" style="top:409.0px;background:#579db8">
<div class="win"><svg width="16" height="16" viewBox="0 0 16 16" fill="currentColor"><path d="M0 2.3L6.5 1.4V7.6H0zM7.3 1.3L16 0V7.6H7.3zM0 8.4H6.5V14.6L0 13.7zM7.3 8.4H16V16L7.3 14.7z"/></svg></div>
<div class="os">Windows 10 Professional 64 bit</div>
<div class="date">February 19, 2026 08:24</div>
<div class="chk"><svg width="17" height="14" viewBox="0 0 17 14"><path d="M2 8L6 11.8L15.3 2.2" fill="none" stroke="currentColor" stroke-width="3.1" stroke-linecap="round" stroke-linejoin="round"/></svg></div>
<div class="file"><svg width="12.3" height="15.5" viewBox="4 2 16 20"><path d="M6 2c-1.1 0-1.99.9-1.99 2L4 20c0 1.1.89 2 1.99 2H18c1.1 0 2-.9 2-2V8l-6-6H6zm7 7V3.5L18.5 9H13z" fill="currentColor"/></svg></div>
<div class="badge mal"><span>Malicious activity</span></div>
<div class="sicons"><span class="sic stack"><svg width="12" height="12" viewBox="0 0 12 12"><g fill="#579db8" stroke="currentColor" stroke-width=".8" opacity=".9"><rect x=".45" y=".45" width="8.5" height="6.5"/><rect x="2.2" y="2.2" width="8.5" height="6.8"/><rect x="3.95" y="4.3" width="7.6" height="7.25"/></g><g fill="currentColor" opacity=".75"><rect x=".45" y=".45" width="8.5" height="1.1"/><rect x="2.2" y="2.2" width="8.5" height="1.1"/><rect x="3.95" y="4.3" width="7.6" height="1.1"/></g></svg></span><span class="sic checker"><svg width="12" height="12" viewBox="0 0 12 12"><g fill="currentColor" opacity=".7"><rect x="0.0" y="0.0" width="1.5" height="1.5"/><rect x="3.0" y="0.0" width="1.5" height="1.5"/><rect x="6.0" y="0.0" width="1.5" height="1.5"/><rect x="9.0" y="0.0" width="1.5" height="1.5"/><rect x="1.5" y="1.5" width="1.5" height="1.5"/><rect x="4.5" y="1.5" width="1.5" height="1.5"/><rect x="7.5" y="1.5" width="1.5" height="1.5"/><rect x="10.5" y="1.5" width="1.5" height="1.5"/><rect x="0.0" y="3.0" width="1.5" height="1.5"/><rect x="3.0" y="3.0" width="1.5" height="1.5"/><rect x="6.0" y="3.0" width="1.5" height="1.5"/><rect x="9.0" y="3.0" width="1.5" height="1.5"/><rect x="1.5" y="4.5" width="1.5" height="1.5"/><rect x="4.5" y="4.5" width="1.5" height="1.5"/><rect x="7.5" y="4.5" width="1.5" height="1.5"/><rect x="10.5" y="4.5" width="1.5" height="1.5"/></g><rect x="0" y="0" width="1.1" height="12" fill="currentColor" opacity=".8"/><path d="M.5 .5H11.5V6" fill="none" stroke="currentColor" stroke-width=".8" opacity=".6"/><circle cx="8.4" cy="8.5" r="3.6" fill="#579db8"/><circle cx="8.4" cy="8.5" r="3.0" fill="none" stroke="currentColor" stroke-width="1.3"/><path d="M8.4 5.8v5.4M5.7 8.5h5.4" stroke="currentColor" stroke-width="1.4"/></svg></span></div>
<div class="fname">moonrise-client.exe</div>
<div class="desc">PE32+ executable (GUI) x86-64 (stripped to external PDB), for MS…</div>
<div class="tags"><span class="tag">moonrise</span><span class="tag">rat</span></div>
<div class="hl" style="top:6px">MD5:</div><div class="hl" style="top:19.3px">SHA1:</div><div class="hl" style="top:32.6px">SHA256:</div>
<div class="cp" style="top:6.3px"><svg width="8" height="8" viewBox="0 0 8 8" fill="none" stroke="currentColor" stroke-width=".9"><rect x="2.5" y=".5" width="5" height="5" rx="1"/><path d="M2 2.5H1.3Q.5 2.5 .5 3.3V6.7Q.5 7.5 1.3 7.5H4.7Q5.5 7.5 5.5 6.7V6"/></svg></div>
<div class="cp" style="top:19.6px"><svg width="8" height="8" viewBox="0 0 8 8" fill="none" stroke="currentColor" stroke-width=".9"><rect x="2.5" y=".5" width="5" height="5" rx="1"/><path d="M2 2.5H1.3Q.5 2.5 .5 3.3V6.7Q.5 7.5 1.3 7.5H4.7Q5.5 7.5 5.5 6.7V6"/></svg></div>
<div class="cp" style="top:32.9px"><svg width="8" height="8" viewBox="0 0 8 8" fill="none" stroke="currentColor" stroke-width=".9"><rect x="2.5" y=".5" width="5" height="5" rx="1"/><path d="M2 2.5H1.3Q.5 2.5 .5 3.3V6.7Q.5 7.5 1.3 7.5H4.7Q5.5 7.5 5.5 6.7V6"/></svg></div>
<div class="hv" style="top:6.6px">22D892EE990B3D75E3FFF497B75667DD</div><div class="hv" style="top:19.9px">2DB8CCE5BB24A768A7A60C28E46B8B1E1655FC5F</div><div class="hv" style="top:33.2px">ED5471D42BEF6B32253E9C1ABA49B01B8282FD096AD0957ABCF1A1E27E8F7551</div>
</div>
<div class="row dk" style="top:456.5px;background:#3d8bab">
<div class="win"><svg width="16" height="16" viewBox="0 0 16 16" fill="currentColor"><path d="M0 2.3L6.5 1.4V7.6H0zM7.3 1.3L16 0V7.6H7.3zM0 8.4H6.5V14.6L0 13.7zM7.3 8.4H16V16L7.3 14.7z"/></svg></div>
<div class="os">Windows 10 Professional 64 bit</div>
<div class="date">February 18, 2026 13:48</div>
<div class="chk"><svg width="17" height="14" viewBox="0 0 17 14"><path d="M2 8L6 11.8L15.3 2.2" fill="none" stroke="currentColor" stroke-width="3.1" stroke-linecap="round" stroke-linejoin="round"/></svg></div>
<div class="file"><svg width="12.3" height="15.5" viewBox="4 2 16 20"><path d="M6 2c-1.1 0-1.99.9-1.99 2L4 20c0 1.1.89 2 1.99 2H18c1.1 0 2-.9 2-2V8l-6-6H6zm7 7V3.5L18.5 9H13z" fill="currentColor"/></svg></div>
<div class="badge sus"><span>Suspicious activity</span></div>
<div class="sicons"><span class="sic doc"><svg width="12" height="12" viewBox="0 0 12 12" fill="none" stroke="currentColor" stroke-width=".85"><path d="M2.2 .45h5.4L10.9 3.2v8.35H2.2z"/><path d="M7.4 .6v2.7h3.3" stroke-width=".7"/><path d="M3.6 4.6h5.9M3.6 6.7h5.9M3.6 8.8h5.9M3.6 10.4h5.9M6.5 4.6v5.8M3.6 4.6v5.8M9.5 4.6v5.8" stroke-width=".75"/><path d="M3.6 2.2h2.6" stroke-width=".8"/></svg></span></div>
<div class="fname">moonrise-client.exe</div>
<div class="desc">PE32+ executable (GUI) x86-64 (stripped to external PDB), for MS…</div>
<div class="tags"><span class="tag">moonrise</span><span class="tag">crypto-regex</span><span class="tag">golang</span><span class="tag">websocket</span></div>
<div class="hl" style="top:6px">MD5:</div><div class="hl" style="top:19.3px">SHA1:</div><div class="hl" style="top:32.6px">SHA256:</div>
<div class="cp" style="top:6.3px"><svg width="8" height="8" viewBox="0 0 8 8" fill="none" stroke="currentColor" stroke-width=".9"><rect x="2.5" y=".5" width="5" height="5" rx="1"/><path d="M2 2.5H1.3Q.5 2.5 .5 3.3V6.7Q.5 7.5 1.3 7.5H4.7Q5.5 7.5 5.5 6.7V6"/></svg></div>
<div class="cp" style="top:19.6px"><svg width="8" height="8" viewBox="0 0 8 8" fill="none" stroke="currentColor" stroke-width=".9"><rect x="2.5" y=".5" width="5" height="5" rx="1"/><path d="M2 2.5H1.3Q.5 2.5 .5 3.3V6.7Q.5 7.5 1.3 7.5H4.7Q5.5 7.5 5.5 6.7V6"/></svg></div>
<div class="cp" style="top:32.9px"><svg width="8" height="8" viewBox="0 0 8 8" fill="none" stroke="currentColor" stroke-width=".9"><rect x="2.5" y=".5" width="5" height="5" rx="1"/><path d="M2 2.5H1.3Q.5 2.5 .5 3.3V6.7Q.5 7.5 1.3 7.5H4.7Q5.5 7.5 5.5 6.7V6"/></svg></div>
<div class="hv" style="top:6.6px">04F155DB6A0AB55AAC69CCBCE9B1BC83</div><div class="hv" style="top:19.9px">60B37410F9EB225A6258E3E4E7578C3CAF1D8AA8</div><div class="hv" style="top:33.2px">C7FD265B23B2255729EED688A211F8C3BD2192834C00E4959D1F17A0B697CD5E</div>
</div>
<div class="row lt" style="top:504.0px;background:#579db8">
<div class="win"><svg width="16" height="16" viewBox="0 0 16 16" fill="currentColor"><path d="M0 2.3L6.5 1.4V7.6H0zM7.3 1.3L16 0V7.6H7.3zM0 8.4H6.5V14.6L0 13.7zM7.3 8.4H16V16L7.3 14.7z"/></svg></div>
<div class="os">Windows 10 Professional 64 bit</div>
<div class="date">February 16, 2026 19:01</div>
<div class="chk"><svg width="17" height="14" viewBox="0 0 17 14"><path d="M2 8L6 11.8L15.3 2.2" fill="none" stroke="currentColor" stroke-width="3.1" stroke-linecap="round" stroke-linejoin="round"/></svg></div>
<div class="file"><svg width="12.3" height="15.5" viewBox="4 2 16 20"><path d="M6 2c-1.1 0-1.99.9-1.99 2L4 20c0 1.1.89 2 1.99 2H18c1.1 0 2-.9 2-2V8l-6-6H6zm7 7V3.5L18.5 9H13z" fill="currentColor"/></svg></div>
<div class="badge mal"><span>Malicious activity</span></div>
<div class="sicons"><span class="sic stack"><svg width="12" height="12" viewBox="0 0 12 12"><g fill="#579db8" stroke="currentColor" stroke-width=".8" opacity=".9"><rect x=".45" y=".45" width="8.5" height="6.5"/><rect x="2.2" y="2.2" width="8.5" height="6.8"/><rect x="3.95" y="4.3" width="7.6" height="7.25"/></g><g fill="currentColor" opacity=".75"><rect x=".45" y=".45" width="8.5" height="1.1"/><rect x="2.2" y="2.2" width="8.5" height="1.1"/><rect x="3.95" y="4.3" width="7.6" height="1.1"/></g></svg></span><span class="sic doc"><svg width="12" height="12" viewBox="0 0 12 12" fill="none" stroke="currentColor" stroke-width=".85"><path d="M2.2 .45h5.4L10.9 3.2v8.35H2.2z"/><path d="M7.4 .6v2.7h3.3" stroke-width=".7"/><path d="M3.6 4.6h5.9M3.6 6.7h5.9M3.6 8.8h5.9M3.6 10.4h5.9M6.5 4.6v5.8M3.6 4.6v5.8M9.5 4.6v5.8" stroke-width=".75"/><path d="M3.6 2.2h2.6" stroke-width=".8"/></svg></span></div>
<div class="fname">moonrise-client.exe</div>
<div class="desc">PE32+ executable (GUI) x86-64 (stripped to external PDB), for MS…</div>
<div class="tags"><span class="tag">moonrise</span><span class="tag">websocket</span><span class="tag">crypto-regex</span><span class="tag">golang</span></div>
<div class="hl" style="top:6px">MD5:</div><div class="hl" style="top:19.3px">SHA1:</div><div class="hl" style="top:32.6px">SHA256:</div>
<div class="cp" style="top:6.3px"><svg width="8" height="8" viewBox="0 0 8 8" fill="none" stroke="currentColor" stroke-width=".9"><rect x="2.5" y=".5" width="5" height="5" rx="1"/><path d="M2 2.5H1.3Q.5 2.5 .5 3.3V6.7Q.5 7.5 1.3 7.5H4.7Q5.5 7.5 5.5 6.7V6"/></svg></div>
<div class="cp" style="top:19.6px"><svg width="8" height="8" viewBox="0 0 8 8" fill="none" stroke="currentColor" stroke-width=".9"><rect x="2.5" y=".5" width="5" height="5" rx="1"/><path d="M2 2.5H1.3Q.5 2.5 .5 3.3V6.7Q.5 7.5 1.3 7.5H4.7Q5.5 7.5 5.5 6.7V6"/></svg></div>
<div class="cp" style="top:32.9px"><svg width="8" height="8" viewBox="0 0 8 8" fill="none" stroke="currentColor" stroke-width=".9"><rect x="2.5" y=".5" width="5" height="5" rx="1"/><path d="M2 2.5H1.3Q.5 2.5 .5 3.3V6.7Q.5 7.5 1.3 7.5H4.7Q5.5 7.5 5.5 6.7V6"/></svg></div>
<div class="hv" style="top:6.6px">04F155DB6A0AB55AAC69CCBCE9B1BC83</div><div class="hv" style="top:19.9px">60B37410F9EB225A6258E3E4E7578C3CAF1D8AA8</div><div class="hv" style="top:33.2px">C7FD265B23B2255729EED688A211F8C3BD2192834C00E4959D1F17A0B697CD5E</div>
</div>
<div id="scroll"></div>
</body></html>
